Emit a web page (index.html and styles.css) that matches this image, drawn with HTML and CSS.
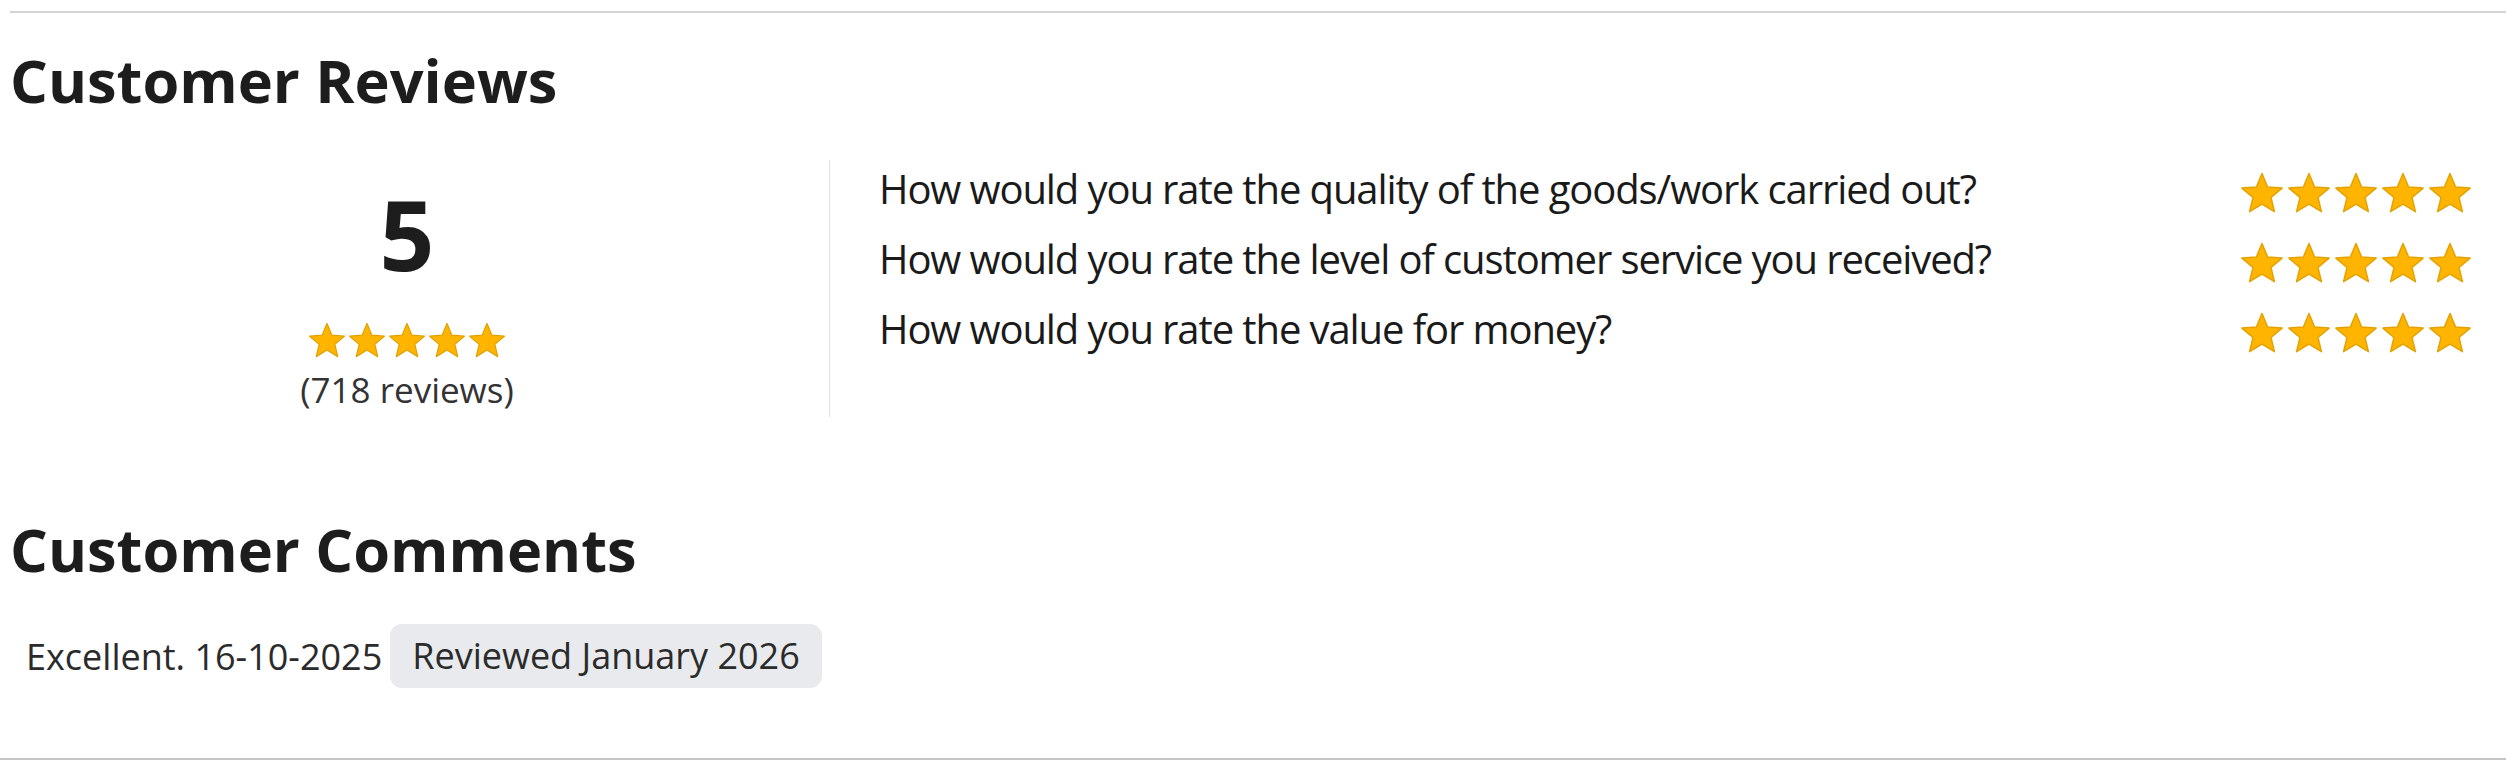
FILE: index.html
```html
<!DOCTYPE html>
<html>
<head>
    <title>Customer Reviews</title>
    <link rel="stylesheet" href="styles.css">
</head>
<body>
    <svg class="sprite" xmlns="http://www.w3.org/2000/svg">
        <symbol id="star" viewBox="-10.4 -10.6 20.8 19.2">
            <path d="M0,-10 L2.645,-3.64 L9.51,-3.09 L4.28,1.39 L5.88,8.09 L0,4.5 L-5.88,8.09 L-4.28,1.39 L-9.51,-3.09 L-2.645,-3.64 Z"/>
        </symbol>
    </svg>

    <div class="top-rule"></div>

    <section class="reviews">
        <h2 class="section-title">Customer Reviews</h2>

        <div class="rating-panel">
            <div class="rating-summary">
                <div class="rating-score">5</div>
                <div class="stars stars-small">
                    <svg><use href="#star"/></svg>
                    <svg><use href="#star"/></svg>
                    <svg><use href="#star"/></svg>
                    <svg><use href="#star"/></svg>
                    <svg><use href="#star"/></svg>
                </div>
                <div class="rating-count">(718 reviews)</div>
            </div>

            <div class="rating-questions">
                <div class="question-row">
                    <span class="question-text">How would you rate the quality of the goods/work carried out?</span>
                    <div class="stars stars-large">
                        <svg><use href="#star"/></svg>
                        <svg><use href="#star"/></svg>
                        <svg><use href="#star"/></svg>
                        <svg><use href="#star"/></svg>
                        <svg><use href="#star"/></svg>
                    </div>
                </div>
                <div class="question-row">
                    <span class="question-text">How would you rate the level of customer service you received?</span>
                    <div class="stars stars-large">
                        <svg><use href="#star"/></svg>
                        <svg><use href="#star"/></svg>
                        <svg><use href="#star"/></svg>
                        <svg><use href="#star"/></svg>
                        <svg><use href="#star"/></svg>
                    </div>
                </div>
                <div class="question-row">
                    <span class="question-text">How would you rate the value for money?</span>
                    <div class="stars stars-large">
                        <svg><use href="#star"/></svg>
                        <svg><use href="#star"/></svg>
                        <svg><use href="#star"/></svg>
                        <svg><use href="#star"/></svg>
                        <svg><use href="#star"/></svg>
                    </div>
                </div>
            </div>
        </div>

        <h2 class="section-title comments-title">Customer Comments</h2>

        <div class="comment-row">
            <span class="comment-text">Excellent. 16-10-2025</span>
            <span class="comment-badge">Reviewed January 2026</span>
        </div>
    </section>

    <div class="bottom-rule"></div>
</body>
</html>
```

FILE: styles.css
```css
body {
    margin: 0;
    padding-top: 11px;
    background-color: #ffffff;
    font-family: 'Open Sans', 'Noto Sans', sans-serif;
    color: #1d1d1d;
}

.sprite {
    display: none;
}

.top-rule {
    height: 2px;
    margin-left: 10px;
    background-color: #d4d4d4;
}

.reviews {
    padding-left: 10px;
}

.section-title {
    margin: 31px 0 45px 0;
    font-size: 59.5px;
    font-weight: 700;
    line-height: 71px;
    color: #1d1d1d;
}

.rating-panel {
    display: flex;
    align-items: stretch;
}

.rating-summary {
    width: 794px;
    margin-right: 25px;
    padding: 26px 0 6px 0;
    display: flex;
    flex-direction: column;
    align-items: center;
}

.rating-score {
    font-size: 96px;
    font-weight: 700;
    line-height: 1;
    color: #1d1d1d;
}

.stars {
    display: flex;
}

.stars svg {
    fill: #ffb400;
    stroke: #e3a200;
    stroke-width: 0.7;
    stroke-linejoin: round;
}

.stars-small {
    margin-top: 40px;
    gap: 2px;
}

.stars-small svg {
    width: 38px;
    height: 36px;
}

.rating-count {
    margin-top: 11px;
    font-size: 35px;
    line-height: 42px;
    color: #333333;
}

.rating-questions {
    flex: 1;
    border-left: 1px solid #dedede;
    padding: 1px 34px 0 49px;
    display: flex;
    flex-direction: column;
    gap: 14px;
}

.question-row {
    display: flex;
    justify-content: space-between;
    align-items: center;
    height: 56px;
}

.question-text {
    font-size: 40px;
    line-height: 56px;
    letter-spacing: -1.1px;
    color: #1a1a1a;
}

.stars-large {
    gap: 3px;
    margin-top: 6px;
}

.stars-large svg {
    width: 44px;
    height: 41px;
}

.comments-title {
    margin: 96px 0 40px 0;
}

.comment-row {
    display: flex;
    align-items: center;
    gap: 8px;
    padding-left: 16px;
    font-size: 36px;
    color: #2b2b2b;
}

.comment-badge {
    padding: 8px 22px;
    background-color: #e8eaed;
    border-radius: 12px;
    line-height: 48px;
}

.bottom-rule {
    height: 2px;
    margin-top: 70px;
    background-color: #c4c4c4;
}
```
